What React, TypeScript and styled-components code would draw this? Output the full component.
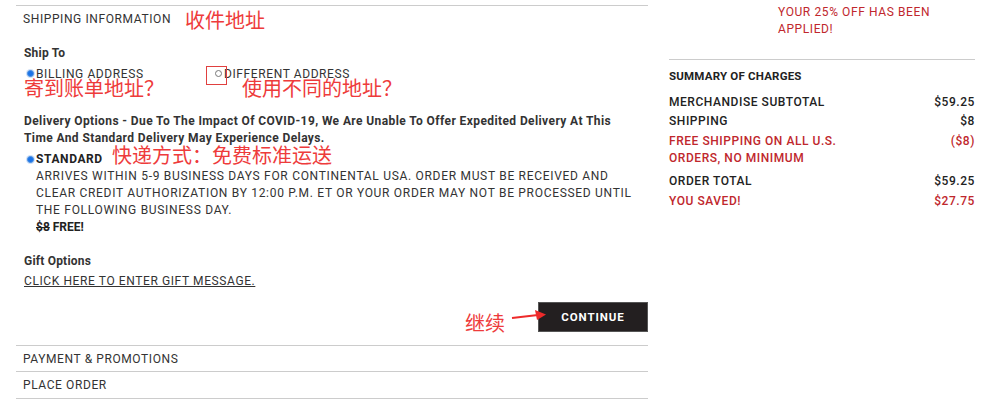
import styled, { createGlobalStyle } from "styled-components";

const GlobalStyle = createGlobalStyle`
  body {
    margin: 0;
    background: #fff;
    font-family: Roboto, "Liberation Sans", Arial, sans-serif;
    color: #333;
  }
`;

const Page = styled.div`
  display: flex;
  align-items: flex-start;
  width: 999px;
  height: 419px;
  overflow: hidden;
  position: relative;
`;

const Main = styled.div`
  width: 632px;
  margin-left: 16px;
  margin-top: 5px;
  position: relative;
`;

const Side = styled.div`
  width: 306px;
  margin-left: 21px;
`;

const Section = styled.div`
  border-top: 1px solid #ccc;
  position: relative;
`;

const SectionTitle = styled.div`
  padding: 5px 7px 0;
  height: 21px;
  line-height: 16px;
  font-size: 12px;
  letter-spacing: 0.6px;
  color: #333;
`;

const Body = styled.div`
  padding: 13px 8px 0;
  position: relative;
`;

const Label = styled.div<{ top?: number }>`
  font-size: 12px;
  font-weight: 700;
  line-height: 16px;
  letter-spacing: 0.2px;
  color: #333;
  margin-top: ${(p) => p.top ?? 0}px;
`;

const RadioRow = styled.div`
  display: flex;
  align-items: center;
  height: 17px;
  margin-top: 4px;
`;

const RadioOption = styled.label<{ width?: number }>`
  display: flex;
  align-items: center;
  width: ${(p) => (p.width ? `${p.width}px` : "auto")};
  font-size: 12px;
  letter-spacing: 0.6px;
  color: #333;
  position: relative;
`;

const Dot = styled.span<{ checked?: boolean }>`
  width: 7px;
  height: 7px;
  border-radius: 50%;
  box-sizing: border-box;
  margin: 0 2px 0 3px;
  background: ${(p) => (p.checked ? "#1a73e8" : "#fff")};
  border: 1px solid ${(p) => (p.checked ? "#4a90e2" : "#777")};
  box-shadow: ${(p) => (p.checked ? "0 0 0 1px #cfe0f7" : "none")};
  flex: none;
`;

const Notice = styled.div`
  margin-top: 31px;
  font-size: 12px;
  font-weight: 700;
  line-height: 17px;
  letter-spacing: 0.4px;
  color: #333;
`;

const Option = styled.div`
  margin-top: 3px;
`;

const OptionHead = styled.div`
  display: flex;
  align-items: center;
  height: 18px;
  font-size: 12px;
  font-weight: 700;
  letter-spacing: 0.6px;
  color: #222;
`;

const OptionText = styled.div`
  padding-left: 12px;
  font-size: 12px;
  line-height: 17px;
  letter-spacing: 0.7px;
  color: #333;
`;

const Price = styled.div`
  padding-left: 12px;
  font-size: 12px;
  font-weight: 700;
  line-height: 17px;
  color: #222;

  s {
    margin-right: 3px;
  }
`;

const GiftLink = styled.a`
  display: inline-block;
  margin-top: 4px;
  font-size: 12px;
  line-height: 16px;
  letter-spacing: 0.6px;
  color: #333;
  text-decoration: underline;
`;

const Actions = styled.div`
  display: flex;
  justify-content: flex-end;
  margin-top: 13px;
  margin-right: -8px;
  padding-bottom: 13px;
  position: relative;
`;

const Button = styled.button`
  width: 110px;
  height: 30px;
  background: #231f20;
  border: 1px solid #555;
  color: #fff;
  font-family: Roboto, "Liberation Sans", Arial, sans-serif;
  font-size: 11.5px;
  font-weight: 700;
  letter-spacing: 0.9px;
  cursor: pointer;
`;

const Collapsed = styled.div`
  border-top: 1px solid #ccc;
  height: 25px;
  line-height: 26px;
  padding-left: 7px;
  font-size: 12px;
  letter-spacing: 0.6px;
  color: #333;

  &:last-child {
    height: 26px;
    border-bottom: 1px solid #ccc;
  }
`;

const Promo = styled.div`
  padding: 4px 0 0 109px;
  height: 55px;
  font-size: 12px;
  line-height: 17px;
  letter-spacing: 0.6px;
  color: #c0272d;
`;

const Summary = styled.div`
  border-top: 1px solid #ccc;
  padding-top: 8px;
`;

const SummaryTitle = styled.div`
  font-size: 11.5px;
  font-weight: 700;
  letter-spacing: 0.2px;
  line-height: 16px;
  color: #222;
  margin-bottom: 10px;
`;

const Row = styled.div<{ red?: boolean; gap?: number }>`
  display: flex;
  justify-content: space-between;
  align-items: flex-start;
  margin-top: ${(p) => p.gap ?? 0}px;
  font-size: 12px;
  font-weight: 500;
  line-height: 17px;
  letter-spacing: 0.55px;
  color: ${(p) => (p.red ? "#c0272d" : "#222")};

  span:first-child {
    max-width: 190px;
  }
`;

const Note = styled.span<{ x: number; y: number }>`
  position: absolute;
  left: ${(p) => p.x}px;
  top: ${(p) => p.y}px;
  font-family: "Noto Sans CJK SC", "Noto Sans", sans-serif;
  font-size: 20px;
  line-height: 22px;
  color: #ee3b3b;
  white-space: nowrap;
  pointer-events: none;
`;

const Marker = styled.span`
  position: absolute;
  left: -6px;
  top: -1px;
  width: 19px;
  height: 17px;
  border: 1px solid #e0403f;
`;

const Arrow = styled.svg`
  position: absolute;
  left: 494px;
  top: 302px;
`;

export default function App() {
  return (
    <Page>
      <GlobalStyle />
      <Main>
        <Section>
          <SectionTitle>SHIPPING INFORMATION</SectionTitle>
          <Body>
            <Label>Ship To</Label>
            <RadioRow>
              <RadioOption width={188}>
                <Dot checked />
                BILLING ADDRESS
              </RadioOption>
              <RadioOption>
                <Marker />
                <Dot />
                DIFFERENT ADDRESS
              </RadioOption>
            </RadioRow>
            <Notice>
              Delivery Options - Due To The Impact Of COVID-19, We Are Unable To Offer Expedited Delivery At This
              <br />
              Time And Standard Delivery May Experience Delays.
            </Notice>
            <Option>
              <OptionHead>
                <Dot checked />
                STANDARD
              </OptionHead>
              <OptionText>
                ARRIVES WITHIN 5-9 BUSINESS DAYS FOR CONTINENTAL USA. ORDER MUST BE RECEIVED AND
                <br />
                CLEAR CREDIT AUTHORIZATION BY 12:00 P.M. ET OR YOUR ORDER MAY NOT BE PROCESSED UNTIL
                <br />
                THE FOLLOWING BUSINESS DAY.
              </OptionText>
              <Price>
                <s>$8</s>FREE!
              </Price>
            </Option>
            <Label top={17}>Gift Options</Label>
            <GiftLink href="#">CLICK HERE TO ENTER GIFT MESSAGE.</GiftLink>
            <Actions>
              <Button>CONTINUE</Button>
            </Actions>
          </Body>
          <Note x={169} y={3}>收件地址</Note>
          <Note x={8} y={71}>寄到账单地址？</Note>
          <Note x={226} y={71}>使用不同的地址？</Note>
          <Note x={96} y={138}>快递方式：免费标准运送</Note>
          <Note x={449} y={306}>继续</Note>
          <Arrow width="40" height="14" viewBox="0 0 40 14">
            <path d="M2 10 L28 7" stroke="#ee2a2a" strokeWidth="2" fill="none" />
            <path d="M25 2 L36 6.5 L27 12 Z" fill="#ee2a2a" />
          </Arrow>
        </Section>
        <Collapsed>PAYMENT &amp; PROMOTIONS</Collapsed>
        <Collapsed>PLACE ORDER</Collapsed>
      </Main>
      <Side>
        <Promo>
          YOUR 25% OFF HAS BEEN
          <br />
          APPLIED!
        </Promo>
        <Summary>
          <SummaryTitle>SUMMARY OF CHARGES</SummaryTitle>
          <Row>
            <span>MERCHANDISE SUBTOTAL</span>
            <span>$59.25</span>
          </Row>
          <Row gap={2}>
            <span>SHIPPING</span>
            <span>$8</span>
          </Row>
          <Row red gap={3}>
            <span>FREE SHIPPING ON ALL U.S. ORDERS, NO MINIMUM</span>
            <span>($8)</span>
          </Row>
          <Row gap={6}>
            <span>ORDER TOTAL</span>
            <span>$59.25</span>
          </Row>
          <Row red gap={3}>
            <span>YOU SAVED!</span>
            <span>$27.75</span>
          </Row>
        </Summary>
      </Side>
    </Page>
  );
}
